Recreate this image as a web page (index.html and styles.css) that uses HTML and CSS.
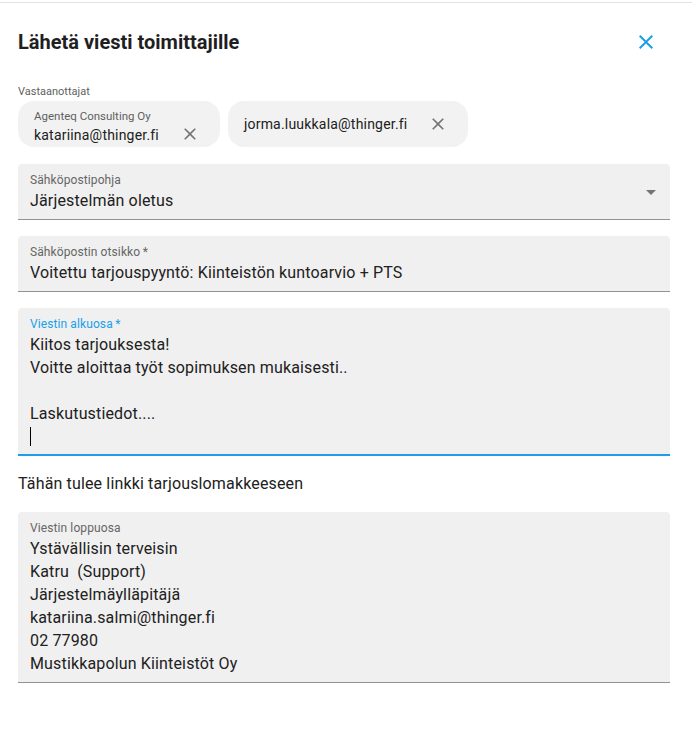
FILE: index.html
```html
<!DOCTYPE html>
<html lang="fi">
<head>
<meta charset="utf-8">
<title>Lähetä viesti toimittajille</title>
<link rel="stylesheet" href="styles.css">
</head>
<body>
<div class="topline"></div>
<div class="dialog">
  <div class="header">
    <h2 class="title">Lähetä viesti toimittajille</h2>
    <svg class="close" viewBox="0 0 24 24" width="24" height="24"><path d="M19 6.41 17.59 5 12 10.59 6.41 5 5 6.41 10.59 12 5 17.59 6.41 19 12 13.41 17.59 19 19 17.59 13.41 12z"/></svg>
  </div>

  <div class="small-label">Vastaanottajat</div>
  <div class="chips">
    <div class="chip chip-two">
      <div class="chip-text">
        <div class="chip-sub">Agenteq Consulting Oy</div>
        <div class="chip-main">katariina@thinger.fi</div>
      </div>
      <svg class="chip-x" viewBox="0 0 24 24" width="20" height="20"><path d="M19 6.41 17.59 5 12 10.59 6.41 5 5 6.41 10.59 12 5 17.59 6.41 19 12 13.41 17.59 19 19 17.59 13.41 12z"/></svg>
    </div>
    <div class="chip">
      <div class="chip-text">
        <div class="chip-main">jorma.luukkala@thinger.fi</div>
      </div>
      <svg class="chip-x" viewBox="0 0 24 24" width="20" height="20"><path d="M19 6.41 17.59 5 12 10.59 6.41 5 5 6.41 10.59 12 5 17.59 6.41 19 12 13.41 17.59 19 19 17.59 13.41 12z"/></svg>
    </div>
  </div>

  <div class="field select">
    <div class="field-body">
      <div class="label">Sähköpostipohja</div>
      <div class="value">Järjestelmän oletus</div>
    </div>
    <svg class="arrow" viewBox="0 0 24 24" width="24" height="24"><path d="M7 10l5 5 5-5z"/></svg>
  </div>

  <div class="field">
    <div class="field-body">
      <div class="label">Sähköpostin otsikko&thinsp;*</div>
      <div class="value">Voitettu tarjouspyyntö: Kiinteistön kuntoarvio + PTS</div>
    </div>
  </div>

  <div class="field focused">
    <div class="field-body">
      <div class="label">Viestin alkuosa&thinsp;*</div>
      <div class="value">Kiitos tarjouksesta!</div>
      <div class="value">Voitte aloittaa työt sopimuksen mukaisesti..</div>
      <div class="value">&nbsp;</div>
      <div class="value">Laskutustiedot....</div>
      <div class="value"><span class="caret"></span></div>
    </div>
  </div>

  <p class="note">Tähän tulee linkki tarjouslomakkeeseen</p>

  <div class="field">
    <div class="field-body">
      <div class="label">Viestin loppuosa</div>
      <div class="value">Ystävällisin terveisin</div>
      <div class="value">Katru&nbsp; (Support)</div>
      <div class="value">Järjestelmäylläpitäjä</div>
      <div class="value">katariina.salmi@thinger.fi</div>
      <div class="value">02 77980</div>
      <div class="value">Mustikkapolun Kiinteistöt Oy</div>
    </div>
  </div>
</div>
</body>
</html>
```

FILE: styles.css
```css
* { box-sizing: border-box; }

html, body {
  margin: 0;
  padding: 0;
  background: #ffffff;
  font-family: Roboto, "Noto Sans", "Liberation Sans", sans-serif;
  color: rgba(0, 0, 0, 0.87);
}

.topline {
  height: 3px;
  border-bottom: 1px solid #e2e2e2;
}

.dialog {
  padding: 23px 22px 0 18px;
}

.header {
  display: flex;
  align-items: center;
  justify-content: space-between;
  height: 32px;
}

.title {
  margin: 0;
  font-size: 20px;
  line-height: 32px;
  font-weight: 700;
  color: #1f1f1f;
}

.close {
  fill: #1a9fe8;
  margin-right: 12px;
}

.small-label {
  margin-top: 27px;
  font-size: 11px;
  line-height: 14px;
  color: #5f5f5f;
}

.chips {
  display: flex;
  gap: 8px;
  margin-top: 2px;
}

.chip {
  display: flex;
  align-items: center;
  height: 46px;
  padding: 0 20px 0 16px;
  background: #f2f2f2;
  border-radius: 16px;
}

.chip-text {
  display: flex;
  flex-direction: column;
}

.chip-two {
  align-items: flex-start;
  padding-top: 8px;
}

.chip-two .chip-x {
  margin-top: 15px;
}

.chip-sub {
  font-size: 11.5px;
  line-height: 14px;
  color: #5f5f5f;
}

.chip-two .chip-main {
  margin-top: 2px;
}

.chip-main {
  font-size: 14px;
  line-height: 20px;
  letter-spacing: 0.2px;
  color: #202020;
}

.chip-x {
  fill: #757575;
  margin-left: 21px;
  flex: none;
}

.field {
  display: flex;
  align-items: flex-start;
  margin-top: 16px;
  padding: 8px 12px 7px;
  background: #f0f0f0;
  border-radius: 4px 4px 0 0;
  border-bottom: 1px solid #929292;
}

.select {
  margin-top: 17px;
  padding-right: 7px;
}

.field-body {
  flex: 1;
}

.label {
  font-size: 12px;
  line-height: 17px;
  letter-spacing: 0.1px;
  color: #666666;
}

.value {
  font-size: 16px;
  line-height: 23px;
  letter-spacing: 0.15px;
  color: #212121;
}

.arrow {
  fill: #757575;
  margin-top: 8px;
}

.focused {
  padding-bottom: 6px;
  border-bottom: 2px solid #1a9fe8;
}

.focused .label {
  color: #1a9fe8;
}

.caret {
  display: inline-block;
  width: 1px;
  height: 19px;
  background: #000000;
  vertical-align: -4px;
}

.note {
  margin: 16px 0;
  font-size: 16px;
  line-height: 24px;
  letter-spacing: 0.15px;
  color: #212121;
}

.note + .field {
  margin-top: 0;
}
```
